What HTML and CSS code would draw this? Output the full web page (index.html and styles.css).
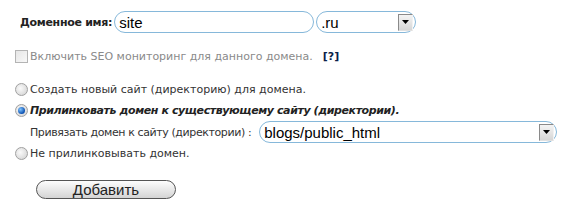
FILE: index.html
```
<!DOCTYPE html>
<html lang="ru">
<head>
  <meta charset="UTF-8" />
  <title>Добавить домен</title>
  <link rel="stylesheet" href="styles.css">
</head>
<body>
  <form class="domain-form">
    <div class="domain-row">
      <label class="domain-label" for="domain-name">Доменное имя:</label>
      <input class="field field-name" id="domain-name" type="text" value="site">
      <span class="field select-box select-zone">
        <select class="select-native">
          <option>.ru</option>
        </select>
        <span class="select-arrow"><svg width="7" height="4" viewBox="0 0 7 4"><path d="M0 0h7L3.5 4z" fill="#000"/></svg></span>
      </span>
    </div>

    <div class="seo-row">
      <span class="check-box"></span>
      <span class="seo-text">Включить SEO мониторинг для данного домена.</span>
      <a class="help-link">[?]</a>
    </div>

    <div class="option-list">
      <label class="option">
        <span class="radio"></span>
        Создать новый сайт (директорию) для домена.
      </label>
      <label class="option option-active">
        <span class="radio radio-on"></span>
        Прилинковать домен к существующему сайту (директории).
      </label>
      <div class="bind-row">
        <span class="bind-label">Привязать домен к сайту (директории) :</span>
        <span class="field select-box select-site">
          <select class="select-native">
            <option>blogs/public_html</option>
          </select>
          <span class="select-arrow"><svg width="7" height="4" viewBox="0 0 7 4"><path d="M0 0h7L3.5 4z" fill="#000"/></svg></span>
        </span>
      </div>
      <label class="option">
        <span class="radio"></span>
        Не прилинковывать домен.
      </label>
    </div>

    <div class="actions">
      <button class="btn-add" type="button">Добавить</button>
    </div>
  </form>
</body>
</html>
```

FILE: styles.css
```
* {
  margin: 0;
  padding: 0;
  box-sizing: border-box;
}

body {
  background: #fff;
  color: #333;
  font-family: "DejaVu Sans", Verdana, sans-serif;
  font-size: 11px;
}

.domain-form {
  padding: 11px 0 0 15px;
}

.domain-row {
  display: flex;
  align-items: center;
  padding-left: 5px;
  height: 22px;
}

.domain-label {
  font-weight: bold;
  color: #222;
  letter-spacing: -0.3px;
  margin-right: 2px;
}

.field {
  height: 22px;
  border: 1px solid #86b8da;
  border-radius: 11px;
  background: #fff;
  font-family: "Liberation Sans", Arial, sans-serif;
  font-size: 15px;
  color: #000;
}

.field-name {
  width: 200px;
  padding: 0 4px;
  outline: none;
}

.select-box {
  display: flex;
  align-items: center;
  padding: 0 2px 0 4px;
}

.select-zone {
  width: 100px;
  margin-left: 2px;
}

.select-site {
  width: 298px;
  margin-left: 8px;
}

.select-native {
  appearance: none;
  -webkit-appearance: none;
  border: none;
  background: transparent;
  font: inherit;
  color: #000;
  flex: 1;
  outline: none;
}

.select-arrow {
  display: flex;
  align-items: center;
  justify-content: center;
  width: 15px;
  height: 17px;
  border: 1px solid #8a8a8a;
  border-right-color: #f2f2f2;
  border-bottom-color: #e0e0e0;
  background: linear-gradient(#f4f4f4, #d6d6d6);
}

.seo-row {
  display: flex;
  align-items: center;
  margin-top: 16px;
  height: 14px;
}

.check-box {
  width: 13px;
  height: 13px;
  border: 1px solid #b4b4b4;
  background: linear-gradient(135deg, #e6e6e6, #f8f8f8);
  margin-right: 2px;
}

.seo-text {
  color: #8a8a8a;
}

.help-link {
  font-weight: bold;
  color: #0b1f4a;
  margin-left: 10px;
}

.option-list {
  margin-top: 16px;
  display: flex;
  flex-direction: column;
}

.option {
  display: flex;
  align-items: center;
  height: 21px;
  color: #333;
}

.option-active {
  font-weight: bold;
  font-style: italic;
  letter-spacing: -0.4px;
  color: #222;
}

.radio {
  width: 13px;
  height: 13px;
  border-radius: 50%;
  border: 1px solid #a0a0a0;
  background: radial-gradient(circle at 40% 40%, #fafafa, #cfcfcf);
  margin-right: 2px;
  display: flex;
  align-items: center;
  justify-content: center;
}

.radio-on::after {
  content: "";
  width: 7px;
  height: 7px;
  border-radius: 50%;
  background: radial-gradient(circle at 35% 35%, #7fc4ff, #0a4fb0 70%);
}

.bind-row {
  display: flex;
  align-items: center;
  height: 22px;
  padding-left: 15px;
}

.bind-label {
  color: #333;
  letter-spacing: -0.4px;
}

.actions {
  margin-top: 16px;
  padding-left: 21px;
}

.btn-add {
  width: 140px;
  height: 19px;
  border: 1px solid #555;
  border-radius: 10px;
  background: linear-gradient(#fdfdfd, #d4d4d4);
  font-family: "Liberation Sans", Arial, sans-serif;
  font-size: 15px;
  color: #222;
  cursor: pointer;
}
```
